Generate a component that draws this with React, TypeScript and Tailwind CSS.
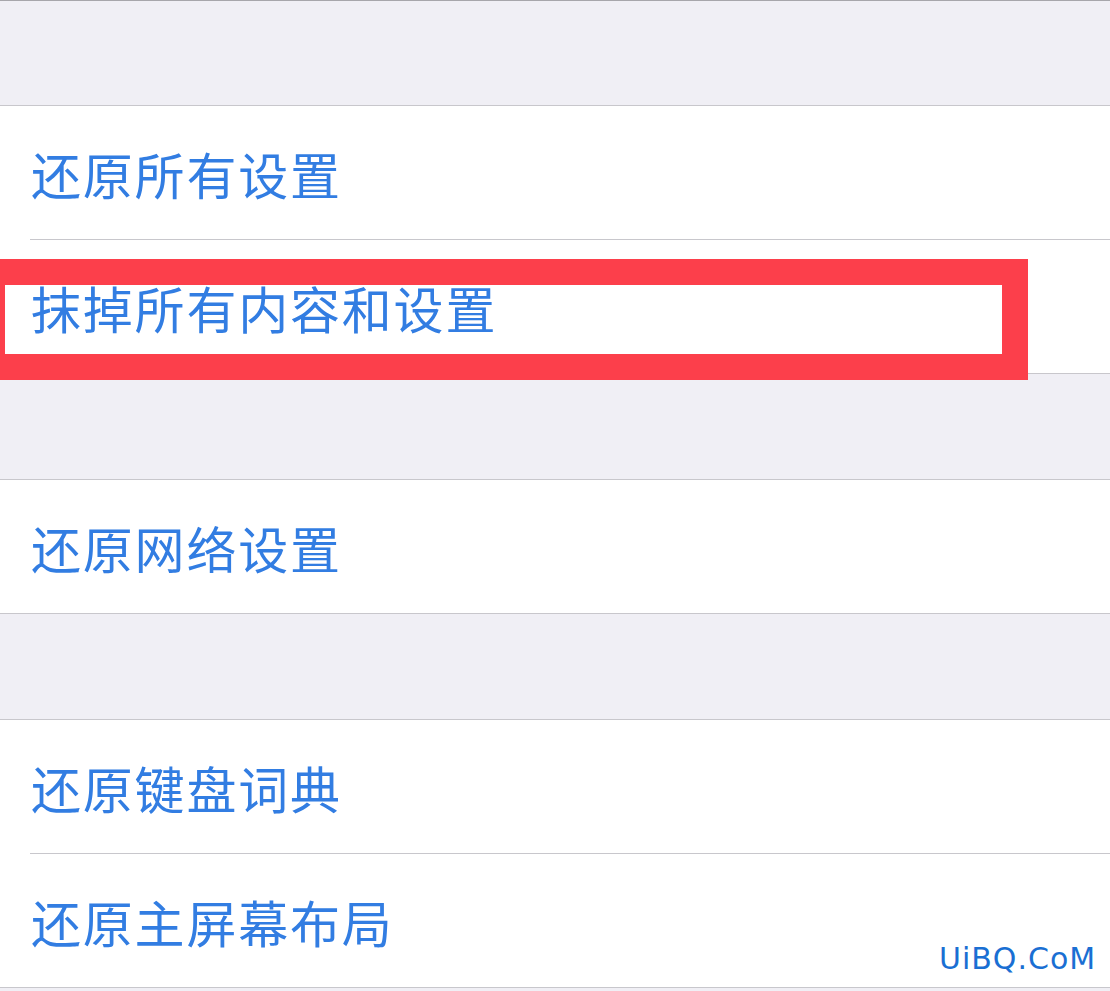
import React from "react";

const font = { fontFamily: '"Noto Sans CJK SC", "Noto Sans", sans-serif' };

function Row({ text }: { text: string }) {
  return (
    <div className="h-[133px] flex items-center pl-[31px]">
      <span className="text-[50px] leading-none tracking-[1.8px] text-[#327de2]" style={font}>
        {text}
      </span>
    </div>
  );
}

export default function App() {
  return (
    <div className="relative w-[1110px] h-[991px] overflow-hidden bg-[#f0eff5]">
      <div className="h-px bg-[#a7a6ab]" />
      <div className="h-[104px]" />
      <div className="bg-white border-t border-b border-[#c8c7cc]">
        <Row text="还原所有设置" />
        <div className="ml-[30px] h-px bg-[#c8c7cc]" />
        <Row text="抹掉所有内容和设置" />
      </div>
      <div className="h-[105px]" />
      <div className="bg-white border-t border-b border-[#c8c7cc]">
        <Row text="还原网络设置" />
      </div>
      <div className="h-[105px]" />
      <div className="bg-white border-t border-b border-[#c8c7cc]">
        <Row text="还原键盘词典" />
        <div className="ml-[30px] h-px bg-[#c8c7cc]" />
        <Row text="还原主屏幕布局" />
      </div>

      <div className="absolute left-0 top-[259px] w-[1028px] h-[121px] border-[#fc3f4b] border-t-[26px] border-b-[26px] border-l-[5px] border-r-[26px]" />

      <div
        className="absolute left-[939px] top-[944px] text-[30px] leading-none tracking-[1px] text-[#1a6fd3]"
        style={{ fontFamily: '"DejaVu Sans", sans-serif' }}
      >
        UiBQ.CoM
      </div>
    </div>
  );
}
